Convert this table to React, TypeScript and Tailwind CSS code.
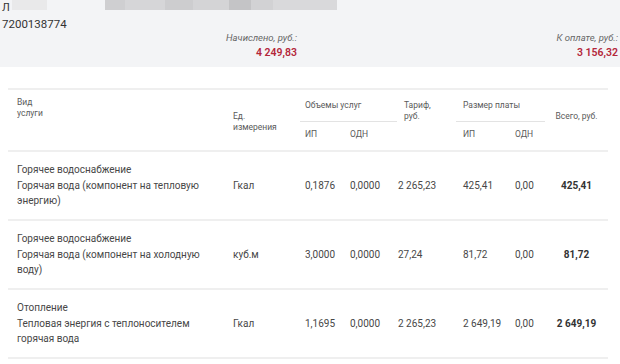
import React from "react";

const rows = [
  {
    name: ["Горячее водоснабжение", "Горячая вода (компонент на тепловую энергию)"],
    unit: "Гкал",
    vals: ["0,1876", "0,0000", "2 265,23", "425,41", "0,00"],
    total: "425,41",
  },
  {
    name: ["Горячее водоснабжение", "Горячая вода (компонент на холодную воду)"],
    unit: "куб.м",
    vals: ["3,0000", "0,0000", "27,24", "81,72", "0,00"],
    total: "81,72",
  },
  {
    name: ["Отопление", "Тепловая энергия с теплоносителем горячая вода"],
    unit: "Гкал",
    vals: ["1,1695", "0,0000", "2 265,23", "2 649,19", "0,00"],
    total: "2 649,19",
  },
];

const cols = "grid-cols-[225px_72px_45px_48px_65px_52px_30px_63px]";

export default function App() {
  return (
    <div className="w-[620px] h-[364px] overflow-hidden bg-white text-[#3a3a3a]" style={{ fontFamily: "Roboto, 'Noto Sans', sans-serif" }}>
      <div className="h-[67px] bg-[#f3f4f6] flex flex-col">
        <div className="flex h-[13px] items-start">
          <div className="pl-[2px] text-[11px] leading-[13px] text-[#333] mt-[1px]">Л</div>
          <div className="ml-[2px] h-[10px] w-[35px] bg-[#e9e9ea]" />
          <div className="ml-[58px] flex h-[10px]">
            <div className="w-[20px] bg-[#cfcfd1]" />
            <div className="w-[40px] bg-[#d6d6d8]" />
            <div className="w-[28px] bg-[#cdcdcf]" />
            <div className="w-[36px] bg-[#d4d4d6]" />
            <div className="w-[22px] bg-[#c4c4c6]" />
            <div className="w-[22px] bg-[#d2d2d4]" />
            <div className="w-[64px] bg-[#d9d9db]" />
          </div>
        </div>
        <div className="pl-[2px] text-[11.5px] leading-[14px] mt-[4px] text-[#333]">7200138774</div>
        <div className="flex mt-[1px]">
          <div className="w-[297px] text-right">
            <div className="text-[9.5px] leading-[12px] italic text-[#666]">Начислено, руб.:</div>
            <div className="text-[10.5px] leading-[13px] mt-[2px] font-semibold text-[#b3263a]">4 249,83</div>
          </div>
          <div className="flex-1 text-right pr-[2px]">
            <div className="text-[9.5px] leading-[12px] italic text-[#666]">К оплате, руб.:</div>
            <div className="text-[10.5px] leading-[13px] mt-[2px] font-semibold text-[#b3263a]">3 156,32</div>
          </div>
        </div>
      </div>

      <div className="ml-[8px] w-[600px] mt-[21px]">
        <div className={`grid ${cols} grid-rows-[32px_28px] border-t-2 border-b-2 border-[#efefef] text-[8.5px] leading-[11px] text-[#5a5a5a]`}>
          <div className="row-span-2 pl-[9px] pt-[7px]">
            <div>Вид</div>
            <div>услуги</div>
          </div>
          <div className="row-span-2 flex flex-col justify-center pt-[3px]">
            <div>Ед.</div>
            <div>измерения</div>
          </div>
          <div className="col-span-2 border-b border-[#e3e3e3] mr-[1px] -ml-[5px] pl-[5px] pt-[10px]">Объемы услуг</div>
          <div className="row-span-2 pl-[6px] pt-[10px]">
            <div>Тариф,</div>
            <div>руб.</div>
          </div>
          <div className="col-span-2 border-b border-[#e3e3e3] -ml-[7px] mr-[0px] pl-[7px] pt-[10px]">Размер платы</div>
          <div className="row-span-2 flex items-center justify-center pb-[8px]">Всего, руб.</div>
          <div className="pt-[7px]">ИП</div>
          <div className="pt-[7px]">ОДН</div>
          <div className="pt-[7px]">ИП</div>
          <div className="pt-[7px]">ОДН</div>
        </div>
        {rows.map((r, i) => (
          <div key={i} className={`grid ${cols} h-[69px] items-center border-b-2 border-[#efefef] text-[10px] leading-[15.5px] text-[#474747]`}>
            <div className="pl-[9px] pr-[14px]">
              <div>{r.name[0]}</div>
              <div>{r.name[1]}</div>
            </div>
            <div>{r.unit}</div>
            {r.vals.map((v, j) => (
              <div key={j} className="whitespace-nowrap">{v}</div>
            ))}
            <div className="text-center font-bold text-[#333] whitespace-nowrap">{r.total}</div>
          </div>
        ))}
      </div>
    </div>
  );
}
